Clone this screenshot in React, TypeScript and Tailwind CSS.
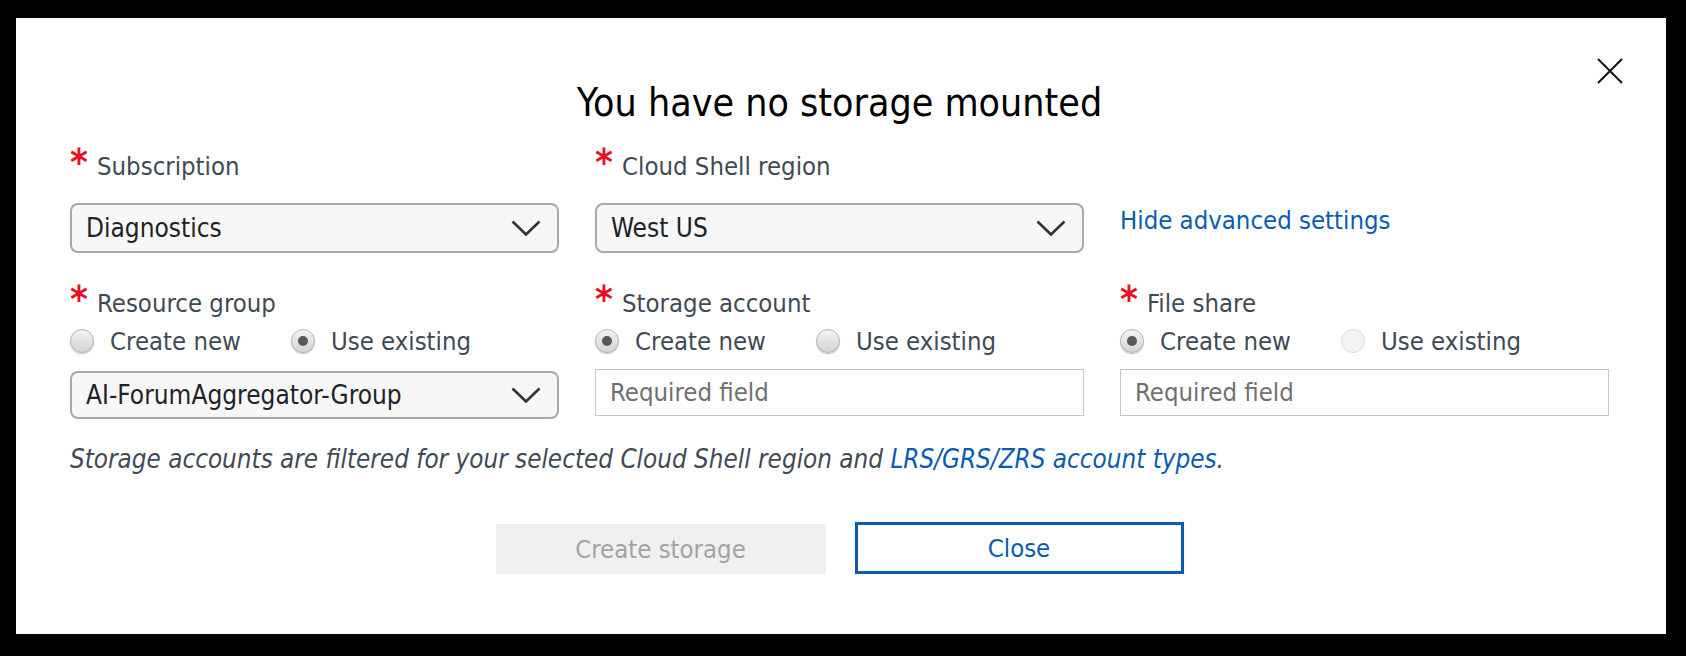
import React from "react";

const FONT = "font-['DejaVu_Sans_Condensed','DejaVu_Sans',sans-serif]";

const Label = ({ text }: { text: string }) => (
  <div className="flex h-[30px] items-baseline text-[25.5px] leading-[30px] text-[#3f4a55]">
    <span className="inline-block w-[27px] text-[38px] font-bold leading-[30px] text-[#e8101f]">*</span>
    <span>{text}</span>
  </div>
);

const Chevron = () => (
  <svg width="30" height="16" viewBox="0 0 30 16" fill="none">
    <path d="M1.5 1.5 15 14.5 28.5 1.5" stroke="#333" strokeWidth="2.6" />
  </svg>
);

const Select = ({ value, tall = true }: { value: string; tall?: boolean }) => (
  <div
    className={`flex items-center justify-between rounded-[8px] border-2 border-[#a8a8a8] bg-[#f7f7f7] pl-[14px] pr-[16px] text-[26px] text-[#1f2226] ${
      tall ? "h-[50px]" : "h-[48px]"
    }`}
  >
    <span>{value}</span>
    <Chevron />
  </div>
);

const TextInput = () => (
  <div className="flex h-[47px] items-center border border-[#c6c6c6] bg-white px-[14px] text-[25.5px] text-[#707070]">
    Required field
  </div>
);

const Radio = ({
  label,
  checked = false,
  disabled = false,
}: {
  label: string;
  checked?: boolean;
  disabled?: boolean;
}) => (
  <div className="flex items-center gap-[16px]">
    <span
      className={`flex h-[24px] w-[24px] items-center justify-center rounded-full border ${
        disabled
          ? "border-[#dcdcdc] bg-[#f3f3f3]"
          : "border-[#b3b3b3] bg-gradient-to-b from-[#f3f3f3] to-[#d4d4d4] shadow-[0_1px_1px_rgba(0,0,0,0.25)]"
      }`}
    >
      {checked && <span className="h-[10px] w-[10px] rounded-full bg-[#595959]" />}
    </span>
    <span className="text-[#3f4a55]">{label}</span>
  </div>
);

const RadioRow = ({ first, lastDisabled = false }: { first: boolean; lastDisabled?: boolean }) => (
  <div className="mt-[12px] flex h-[30px] items-center gap-[50px] text-[25.5px]">
    <Radio label="Create new" checked={first} />
    <Radio label="Use existing" checked={!first} disabled={lastDisabled} />
  </div>
);

export default function App() {
  return (
    <div className={`h-[656px] w-full bg-black pl-[16px] pr-[20px] pt-[18px] ${FONT}`}>
      <div className="relative h-[616px] bg-white pl-[54px] pr-[57px] pt-[63px]">
        <button className="absolute right-[43px] top-[40px]" aria-label="Close">
          <svg width="26" height="26" viewBox="0 0 26 26" fill="none">
            <path d="M1 1 25 25M25 1 1 25" stroke="#111" strokeWidth="2" />
          </svg>
        </button>

        <h1 className="text-center text-[39px] leading-[44px] text-black">You have no storage mounted</h1>

        {/* subscription / region */}
        <div className="mt-[22px] grid grid-cols-[489px_489px_489px] gap-x-[36px]">
          <div>
            <Label text="Subscription" />
            <div className="mt-[26px]">
              <Select value="Diagnostics" />
            </div>
          </div>
          <div>
            <Label text="Cloud Shell region" />
            <div className="mt-[26px]">
              <Select value="West US" />
            </div>
          </div>
          <div className="pt-[58px]">
            <a className="text-[25.5px] leading-[30px] text-[#0a5cb0]" href="#">
              Hide advanced settings
            </a>
          </div>
        </div>

        {/* advanced settings */}
        <div className="mt-[31px] grid grid-cols-[489px_489px_489px] gap-x-[36px]">
          <div>
            <Label text="Resource group" />
            <RadioRow first={false} />
            <div className="mt-[15px]">
              <Select value="AI-ForumAggregator-Group" tall={false} />
            </div>
          </div>
          <div>
            <Label text="Storage account" />
            <RadioRow first />
            <div className="mt-[13px]">
              <TextInput />
            </div>
          </div>
          <div>
            <Label text="File share" />
            <RadioRow first lastDisabled />
            <div className="mt-[13px]">
              <TextInput />
            </div>
          </div>
        </div>

        <p className="mt-[25px] text-[25.8px] italic leading-[30px] text-[#3f4a55]">
          Storage accounts are filtered for your selected Cloud Shell region and{" "}
          <a className="text-[#0a5cb0]" href="#">
            LRS/GRS/ZRS account types
          </a>
          .
        </p>

        <div className="mt-[50px] flex justify-center gap-[29px]">
          <button className="h-[50px] w-[330px] bg-[#f0f0f0] text-[25.5px] text-[#a3a3a3]" disabled>
            Create storage
          </button>
          <button className="-mt-[2px] h-[52px] w-[329px] border-[3px] border-[#0b5cb0] bg-white text-[25.5px] text-[#0a5cb0]">
            Close
          </button>
        </div>
      </div>
    </div>
  );
}
